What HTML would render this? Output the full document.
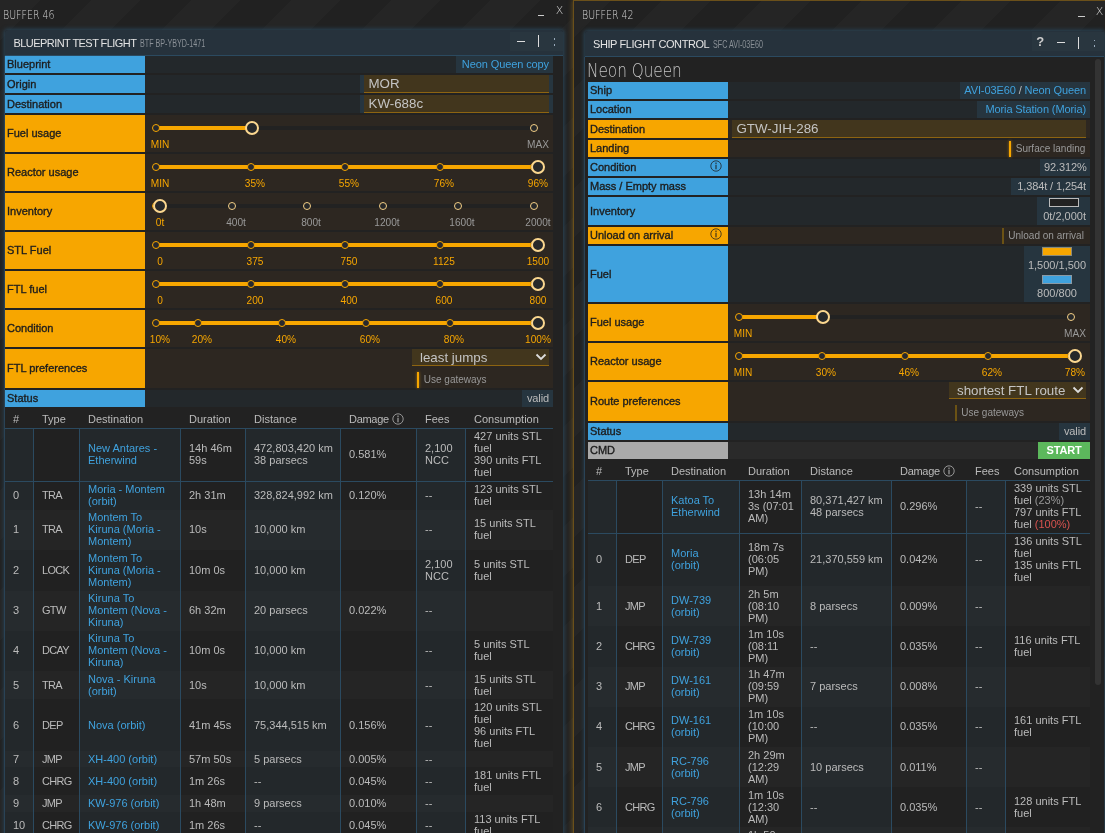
<!DOCTYPE html>
<html lang="en"><head><meta charset="utf-8"><title>Flight control</title>
<style>
*{box-sizing:border-box;margin:0;padding:0}
html,body{width:1105px;height:833px;overflow:hidden;background:#222}
body{position:relative;font-family:"Liberation Sans",sans-serif;font-size:11px;color:#bbb;line-height:12px}
.abs,.abs>*{position:absolute}
#stripes{left:-59px;top:0;width:1164px;height:833px;background:repeating-linear-gradient(135deg,#212121 0,#212121 35.4px,#252525 35.4px,#252525 70.7px)}
.wt{font-family:"DejaVu Sans","Liberation Sans",sans-serif;font-weight:200;color:#d0d0d0;font-size:12px;line-height:14px;white-space:nowrap;transform-origin:0 50%;transform:scaleX(.787)}
.tile{background:#222;box-shadow:0 0 4px 1px #2a4659;border-radius:3px 3px 0 0}
.th{background:#26323c;border-bottom:1px solid #2b4a60;border-radius:3px 3px 0 0}
.tt{color:#e4e4e4;font-size:11px;line-height:14px;white-space:nowrap;letter-spacing:-.55px}
.ts{color:#8a9096;font-size:10px;line-height:14px;white-space:nowrap;transform-origin:0 50%;transform:scaleX(.715)}
.tb{background:#29363f}
.lab{color:#1d1d1d;font-size:11px;white-space:nowrap;-webkit-text-stroke:.35px #1d1d1d;letter-spacing:0}
.lab span{position:absolute;left:2px;top:50%;margin-top:-6.5px;line-height:12px}
.vb{background:#26353f;white-space:nowrap;text-align:right;padding:0 4px;letter-spacing:-.1px}
.a{color:#3fa2de}
.inp{background:#42361d;border-bottom:1px solid #8d6411;color:#c4c4c4;font-size:13.33px;line-height:15px;white-space:nowrap;padding-left:4.5px}
.sl{white-space:nowrap;text-align:center;width:40px;margin-left:-20px;line-height:12px;transform:scaleX(.92)}
.on{color:#f7a600}.off{color:#999}
.dot{width:8px;height:8px;border-radius:50%;border:1.5px solid #f7a600;background:#26282e}
.dot.i{border-color:#f5cf85;background:#26282a}
.hd{width:14px;height:14px;border-radius:50%;border:2px solid #fbd78f;background:#26282a}
.tg{white-space:nowrap;color:#999;line-height:12px;font-size:10px}
td,th{font-weight:normal}
.c{position:absolute;white-space:nowrap;line-height:12.05px}
.ty{letter-spacing:-.7px}
.hl{background:#2b4a60}
.red{color:#d9534f}
.dim{color:#999}
</style></head>
<body class="abs">
<div id="stripes"></div>
<div id="root" class="abs" style="left:0;top:0;width:1105px;height:833px;will-change:transform">
<div class="wt" style="left:2.5px;top:7.5px;">BUFFER 46</div>
<div style="left:538px;top:15px;width:6px;height:1px;background:#ccc"></div>
<div class="wt" style="left:555.7px;top:4px;transform:none;font-size:11px">X</div>
<div class="tile" style="left:5px;top:30px;width:558px;height:810px;"></div>
<div class="th" style="left:5px;top:30px;width:558px;height:26px;"></div>
<div class="tb" style="left:510px;top:32px;width:53px;height:19px;"></div>
<div class="tt" style="left:13.5px;top:36px;">BLUEPRINT TEST FLIGHT</div>
<div class="ts" style="left:140px;top:36.5px;">BTF BP-YBYD-1471</div>
<div style="left:517px;top:41px;width:8px;height:1px;background:#ddd"></div>
<div style="left:538px;top:35px;width:1px;height:12px;background:#ddd"></div>
<div style="left:553.5px;top:38px;width:1.5px;height:1.5px;background:#9ab"></div>
<div style="left:553.5px;top:44px;width:1.5px;height:1.5px;background:#9ab"></div>
<div class="lab" style="left:5px;top:56px;width:140px;height:17px;background:#3fa2de"><span>Blueprint</span></div>
<div style="left:145px;top:56px;width:408px;height:17px;background:#23282b"></div>
<div class="vb a" style="left:456px;top:56px;width:97px;height:17px;"><span style="position:relative;top:2px">Neon Queen copy</span></div>
<div class="lab" style="left:5px;top:75px;width:140px;height:18px;background:#3fa2de"><span>Origin</span></div>
<div style="left:145px;top:75px;width:408px;height:18px;background:#23282b"></div>
<div style="left:360px;top:75px;width:193px;height:18px;background:#26353f"></div>
<div class="inp" style="left:364px;top:75px;width:185px;height:18px;"><span style="position:relative;top:1px">MOR</span></div>
<div class="lab" style="left:5px;top:95px;width:140px;height:18px;background:#3fa2de"><span>Destination</span></div>
<div style="left:145px;top:95px;width:408px;height:18px;background:#23282b"></div>
<div style="left:360px;top:95px;width:193px;height:18px;background:#26353f"></div>
<div class="inp" style="left:364px;top:95px;width:185px;height:18px;"><span style="position:relative;top:1px">KW-688c</span></div>
<div class="lab" style="left:5px;top:115px;width:140px;height:37px;background:#f7a600"><span>Fuel usage</span></div>
<div style="left:145px;top:115px;width:408px;height:37px;background:#2d2721"></div>
<div style="left:159px;top:126px;width:379px;height:4px;background:#222"></div>
<div style="left:159px;top:126px;width:93.0px;height:4px;background:#f7a600"></div>
<div class="dot" style="left:152px;top:124px;width:8px;height:8px;"></div>
<div class="dot i" style="left:530px;top:124px;width:8px;height:8px;"></div>
<div class="hd" style="left:245.0px;top:121px;width:14px;height:14px;"></div>
<div class="sl on" style="left:160px;top:138.3px;">MIN</div>
<div class="sl off" style="left:538px;top:138.3px;">MAX</div>
<div class="lab" style="left:5px;top:154px;width:140px;height:37px;background:#f7a600"><span>Reactor usage</span></div>
<div style="left:145px;top:154px;width:408px;height:37px;background:#2d2721"></div>
<div style="left:159px;top:165px;width:379px;height:4px;background:#222"></div>
<div style="left:159px;top:165px;width:379px;height:4px;background:#f7a600"></div>
<div class="dot" style="left:152px;top:163px;width:8px;height:8px;"></div>
<div class="dot" style="left:246.5px;top:163px;width:8px;height:8px;"></div>
<div class="dot" style="left:341.0px;top:163px;width:8px;height:8px;"></div>
<div class="dot" style="left:435.5px;top:163px;width:8px;height:8px;"></div>
<div class="dot" style="left:530px;top:163px;width:8px;height:8px;"></div>
<div class="hd" style="left:531px;top:160px;width:14px;height:14px;"></div>
<div class="sl on" style="left:160px;top:177.3px;">MIN</div>
<div class="sl on" style="left:254.5px;top:177.3px;">35%</div>
<div class="sl on" style="left:349.0px;top:177.3px;">55%</div>
<div class="sl on" style="left:443.5px;top:177.3px;">76%</div>
<div class="sl on" style="left:538px;top:177.3px;">96%</div>
<div class="lab" style="left:5px;top:193px;width:140px;height:37px;background:#f7a600"><span>Inventory</span></div>
<div style="left:145px;top:193px;width:408px;height:37px;background:#2d2721"></div>
<div style="left:159px;top:204px;width:379px;height:4px;background:#222"></div>
<div style="left:159px;top:204px;width:1px;height:4px;background:#f7a600"></div>
<div class="dot" style="left:152px;top:202px;width:8px;height:8px;"></div>
<div class="dot i" style="left:227.6px;top:202px;width:8px;height:8px;"></div>
<div class="dot i" style="left:303.2px;top:202px;width:8px;height:8px;"></div>
<div class="dot i" style="left:378.8px;top:202px;width:8px;height:8px;"></div>
<div class="dot i" style="left:454.4px;top:202px;width:8px;height:8px;"></div>
<div class="dot i" style="left:530px;top:202px;width:8px;height:8px;"></div>
<div class="hd" style="left:153px;top:199px;width:14px;height:14px;"></div>
<div class="sl on" style="left:160px;top:216.3px;">0t</div>
<div class="sl off" style="left:235.6px;top:216.3px;">400t</div>
<div class="sl off" style="left:311.2px;top:216.3px;">800t</div>
<div class="sl off" style="left:386.8px;top:216.3px;">1200t</div>
<div class="sl off" style="left:462.4px;top:216.3px;">1600t</div>
<div class="sl off" style="left:538px;top:216.3px;">2000t</div>
<div class="lab" style="left:5px;top:232px;width:140px;height:37px;background:#f7a600"><span>STL Fuel</span></div>
<div style="left:145px;top:232px;width:408px;height:37px;background:#2d2721"></div>
<div style="left:159px;top:243px;width:379px;height:4px;background:#222"></div>
<div style="left:159px;top:243px;width:379px;height:4px;background:#f7a600"></div>
<div class="dot" style="left:152px;top:241px;width:8px;height:8px;"></div>
<div class="dot" style="left:246.5px;top:241px;width:8px;height:8px;"></div>
<div class="dot" style="left:341.0px;top:241px;width:8px;height:8px;"></div>
<div class="dot" style="left:435.5px;top:241px;width:8px;height:8px;"></div>
<div class="dot" style="left:530px;top:241px;width:8px;height:8px;"></div>
<div class="hd" style="left:531px;top:238px;width:14px;height:14px;"></div>
<div class="sl on" style="left:160px;top:255.3px;">0</div>
<div class="sl on" style="left:254.5px;top:255.3px;">375</div>
<div class="sl on" style="left:349.0px;top:255.3px;">750</div>
<div class="sl on" style="left:443.5px;top:255.3px;">1125</div>
<div class="sl on" style="left:538px;top:255.3px;">1500</div>
<div class="lab" style="left:5px;top:271px;width:140px;height:37px;background:#f7a600"><span>FTL fuel</span></div>
<div style="left:145px;top:271px;width:408px;height:37px;background:#2d2721"></div>
<div style="left:159px;top:282px;width:379px;height:4px;background:#222"></div>
<div style="left:159px;top:282px;width:379px;height:4px;background:#f7a600"></div>
<div class="dot" style="left:152px;top:280px;width:8px;height:8px;"></div>
<div class="dot" style="left:246.5px;top:280px;width:8px;height:8px;"></div>
<div class="dot" style="left:341.0px;top:280px;width:8px;height:8px;"></div>
<div class="dot" style="left:435.5px;top:280px;width:8px;height:8px;"></div>
<div class="dot" style="left:530px;top:280px;width:8px;height:8px;"></div>
<div class="hd" style="left:531px;top:277px;width:14px;height:14px;"></div>
<div class="sl on" style="left:160px;top:294.3px;">0</div>
<div class="sl on" style="left:254.5px;top:294.3px;">200</div>
<div class="sl on" style="left:349.0px;top:294.3px;">400</div>
<div class="sl on" style="left:443.5px;top:294.3px;">600</div>
<div class="sl on" style="left:538px;top:294.3px;">800</div>
<div class="lab" style="left:5px;top:310px;width:140px;height:37px;background:#f7a600"><span>Condition</span></div>
<div style="left:145px;top:310px;width:408px;height:37px;background:#2d2721"></div>
<div style="left:159px;top:321px;width:379px;height:4px;background:#222"></div>
<div style="left:159px;top:321px;width:379px;height:4px;background:#f7a600"></div>
<div class="dot" style="left:152px;top:319px;width:8px;height:8px;"></div>
<div class="dot" style="left:194.0px;top:319px;width:8px;height:8px;"></div>
<div class="dot" style="left:278.0px;top:319px;width:8px;height:8px;"></div>
<div class="dot" style="left:362.0px;top:319px;width:8px;height:8px;"></div>
<div class="dot" style="left:446.0px;top:319px;width:8px;height:8px;"></div>
<div class="dot" style="left:530px;top:319px;width:8px;height:8px;"></div>
<div class="hd" style="left:531px;top:316px;width:14px;height:14px;"></div>
<div class="sl on" style="left:160px;top:333.3px;">10%</div>
<div class="sl on" style="left:202.0px;top:333.3px;">20%</div>
<div class="sl on" style="left:286.0px;top:333.3px;">40%</div>
<div class="sl on" style="left:370.0px;top:333.3px;">60%</div>
<div class="sl on" style="left:454.0px;top:333.3px;">80%</div>
<div class="sl on" style="left:538px;top:333.3px;">100%</div>
<div class="lab" style="left:5px;top:349px;width:140px;height:39px;background:#f7a600"><span>FTL preferences</span></div>
<div style="left:145px;top:349px;width:408px;height:39px;background:#2d2721"></div>
<div class="inp" style="left:412px;top:349px;width:137px;height:17px;padding-left:8px"><span style="position:relative;top:0.5px">least jumps</span><svg width="12" height="8" viewBox="0 0 12 8" style="position:absolute;right:2px;top:4.3px"><path d="M1.5 1.5 L6 6 L10.5 1.5" fill="none" stroke="#ddd" stroke-width="1.8"/></svg></div>
<div style="left:417px;top:372px;width:2px;height:16px;background:#f7a600;box-shadow:0 0 3px #f7a600aa"></div>
<div class="tg" style="left:423.8px;top:374px;">Use gateways</div>
<div class="lab" style="left:5px;top:390px;width:140px;height:17px;background:#3fa2de"><span>Status</span></div>
<div style="left:145px;top:390px;width:408px;height:17px;background:#23282b"></div>
<div class="vb" style="left:522px;top:390px;width:31px;height:17px;"><span style="position:relative;top:2px">valid</span></div>
<div class="c" style="left:13px;top:412.5px;color:#bbb">#</div>
<div class="c" style="left:42px;top:412.5px;color:#bbb">Type</div>
<div class="c" style="left:88px;top:412.5px;color:#bbb">Destination</div>
<div class="c" style="left:189px;top:412.5px;color:#bbb">Duration</div>
<div class="c" style="left:254px;top:412.5px;color:#bbb">Distance</div>
<div class="c" style="left:349px;top:412.5px;color:#bbb"><span style="letter-spacing:-.3px">Damage</span> <svg width="12" height="12" viewBox="0 0 12 12" style="vertical-align:-2.5px;margin-left:.5px"><circle cx="6" cy="6" r="5.2" fill="none" stroke="#bbb" stroke-width="0.75"/><rect x="5.5" y="4.7" width="1" height="4.6" fill="#bbb"/><rect x="5.4" y="2.6" width="1.2" height="1.2" fill="#bbb"/></svg></div>
<div class="c" style="left:425px;top:412.5px;color:#bbb">Fees</div>
<div class="c" style="left:474px;top:412.5px;color:#bbb">Consumption</div>
<div class="hl" style="left:5px;top:428px;width:548px;height:1px;"></div>
<div style="left:5px;top:429px;width:28px;height:52px;background:#23282b"></div>
<div style="left:34px;top:429px;width:45px;height:52px;background:#212121"></div>
<div style="left:80px;top:429px;width:100px;height:52px;background:#23282b"><div class="c a" style="left:8px;top:12.9px">New Antares -<br>Etherwind</div></div>
<div style="left:181px;top:429px;width:64px;height:52px;background:#212121"><div class="c" style="left:8px;top:12.9px">14h 46m<br>59s</div></div>
<div style="left:246px;top:429px;width:94px;height:52px;background:#23282b"><div class="c" style="left:8px;top:12.9px">472,803,420 km<br>38 parsecs</div></div>
<div style="left:341px;top:429px;width:75px;height:52px;background:#212121"><div class="c" style="left:8px;top:19.0px">0.581%</div></div>
<div style="left:417px;top:429px;width:48px;height:52px;background:#23282b"><div class="c" style="left:8px;top:12.9px">2,100<br>NCC</div></div>
<div style="left:466px;top:429px;width:87px;height:52px;background:#212121"><div class="c" style="left:8px;top:0.9px">427 units STL<br>fuel<br>390 units FTL<br>fuel</div></div>
<div class="hl" style="left:5px;top:481px;width:548px;height:1px;"></div>
<div style="left:5px;top:482px;width:28px;height:28px;background:#23282b"><div class="c" style="left:8px;top:6.8px">0</div></div>
<div style="left:34px;top:482px;width:45px;height:28px;background:#212121"><div class="c ty" style="left:8px;top:6.8px">TRA</div></div>
<div style="left:80px;top:482px;width:100px;height:28px;background:#23282b"><div class="c a" style="left:8px;top:0.8px">Moria - Montem<br>(orbit)</div></div>
<div style="left:181px;top:482px;width:64px;height:28px;background:#212121"><div class="c" style="left:8px;top:6.8px">2h 31m</div></div>
<div style="left:246px;top:482px;width:94px;height:28px;background:#23282b"><div class="c" style="left:8px;top:6.8px">328,824,992 km</div></div>
<div style="left:341px;top:482px;width:75px;height:28px;background:#212121"><div class="c" style="left:8px;top:6.8px">0.120%</div></div>
<div style="left:417px;top:482px;width:48px;height:28px;background:#23282b"><div class="c" style="left:8px;top:6.8px">--</div></div>
<div style="left:466px;top:482px;width:87px;height:28px;background:#212121"><div class="c" style="left:8px;top:0.8px">123 units STL<br>fuel</div></div>
<div style="left:5px;top:510px;width:28px;height:40px;background:#262b2e"><div class="c" style="left:8px;top:13.0px">1</div></div>
<div style="left:34px;top:510px;width:45px;height:40px;background:#252525"><div class="c ty" style="left:8px;top:13.0px">TRA</div></div>
<div style="left:80px;top:510px;width:100px;height:40px;background:#262b2e"><div class="c a" style="left:8px;top:0.9px">Montem To<br>Kiruna (Moria -<br>Montem)</div></div>
<div style="left:181px;top:510px;width:64px;height:40px;background:#252525"><div class="c" style="left:8px;top:13.0px">10s</div></div>
<div style="left:246px;top:510px;width:94px;height:40px;background:#262b2e"><div class="c" style="left:8px;top:13.0px">10,000 km</div></div>
<div style="left:341px;top:510px;width:75px;height:40px;background:#252525"></div>
<div style="left:417px;top:510px;width:48px;height:40px;background:#262b2e"><div class="c" style="left:8px;top:13.0px">--</div></div>
<div style="left:466px;top:510px;width:87px;height:40px;background:#252525"><div class="c" style="left:8px;top:7.0px">15 units STL<br>fuel</div></div>
<div style="left:5px;top:550px;width:28px;height:41px;background:#23282b"><div class="c" style="left:8px;top:14.0px">2</div></div>
<div style="left:34px;top:550px;width:45px;height:41px;background:#212121"><div class="c ty" style="left:8px;top:14.0px">LOCK</div></div>
<div style="left:80px;top:550px;width:100px;height:41px;background:#23282b"><div class="c a" style="left:8px;top:1.9px">Montem To<br>Kiruna (Moria -<br>Montem)</div></div>
<div style="left:181px;top:550px;width:64px;height:41px;background:#212121"><div class="c" style="left:8px;top:14.0px">10m 0s</div></div>
<div style="left:246px;top:550px;width:94px;height:41px;background:#23282b"><div class="c" style="left:8px;top:14.0px">10,000 km</div></div>
<div style="left:341px;top:550px;width:75px;height:41px;background:#212121"></div>
<div style="left:417px;top:550px;width:48px;height:41px;background:#23282b"><div class="c" style="left:8px;top:8.0px">2,100<br>NCC</div></div>
<div style="left:466px;top:550px;width:87px;height:41px;background:#212121"><div class="c" style="left:8px;top:8.0px">5 units STL<br>fuel</div></div>
<div style="left:5px;top:591px;width:28px;height:40px;background:#262b2e"><div class="c" style="left:8px;top:13.2px">3</div></div>
<div style="left:34px;top:591px;width:45px;height:40px;background:#252525"><div class="c ty" style="left:8px;top:13.2px">GTW</div></div>
<div style="left:80px;top:591px;width:100px;height:40px;background:#262b2e"><div class="c a" style="left:8px;top:1.1px">Kiruna To<br>Montem (Nova -<br>Kiruna)</div></div>
<div style="left:181px;top:591px;width:64px;height:40px;background:#252525"><div class="c" style="left:8px;top:13.2px">6h 32m</div></div>
<div style="left:246px;top:591px;width:94px;height:40px;background:#262b2e"><div class="c" style="left:8px;top:13.2px">20 parsecs</div></div>
<div style="left:341px;top:591px;width:75px;height:40px;background:#252525"><div class="c" style="left:8px;top:13.2px">0.022%</div></div>
<div style="left:417px;top:591px;width:48px;height:40px;background:#262b2e"><div class="c" style="left:8px;top:13.2px">--</div></div>
<div style="left:466px;top:591px;width:87px;height:40px;background:#252525"></div>
<div style="left:5px;top:631px;width:28px;height:40px;background:#23282b"><div class="c" style="left:8px;top:13.4px">4</div></div>
<div style="left:34px;top:631px;width:45px;height:40px;background:#212121"><div class="c ty" style="left:8px;top:13.4px">DCAY</div></div>
<div style="left:80px;top:631px;width:100px;height:40px;background:#23282b"><div class="c a" style="left:8px;top:1.3px">Kiruna To<br>Montem (Nova -<br>Kiruna)</div></div>
<div style="left:181px;top:631px;width:64px;height:40px;background:#212121"><div class="c" style="left:8px;top:13.4px">10m 0s</div></div>
<div style="left:246px;top:631px;width:94px;height:40px;background:#23282b"><div class="c" style="left:8px;top:13.4px">10,000 km</div></div>
<div style="left:341px;top:631px;width:75px;height:40px;background:#212121"></div>
<div style="left:417px;top:631px;width:48px;height:40px;background:#23282b"><div class="c" style="left:8px;top:13.4px">--</div></div>
<div style="left:466px;top:631px;width:87px;height:40px;background:#212121"><div class="c" style="left:8px;top:7.4px">5 units STL<br>fuel</div></div>
<div style="left:5px;top:671px;width:28px;height:28px;background:#262b2e"><div class="c" style="left:8px;top:7.5px">5</div></div>
<div style="left:34px;top:671px;width:45px;height:28px;background:#252525"><div class="c ty" style="left:8px;top:7.5px">TRA</div></div>
<div style="left:80px;top:671px;width:100px;height:28px;background:#262b2e"><div class="c a" style="left:8px;top:1.5px">Nova - Kiruna<br>(orbit)</div></div>
<div style="left:181px;top:671px;width:64px;height:28px;background:#252525"><div class="c" style="left:8px;top:7.5px">10s</div></div>
<div style="left:246px;top:671px;width:94px;height:28px;background:#262b2e"><div class="c" style="left:8px;top:7.5px">10,000 km</div></div>
<div style="left:341px;top:671px;width:75px;height:28px;background:#252525"></div>
<div style="left:417px;top:671px;width:48px;height:28px;background:#262b2e"><div class="c" style="left:8px;top:7.5px">--</div></div>
<div style="left:466px;top:671px;width:87px;height:28px;background:#252525"><div class="c" style="left:8px;top:1.5px">15 units STL<br>fuel</div></div>
<div style="left:5px;top:699px;width:28px;height:52px;background:#23282b"><div class="c" style="left:8px;top:19.7px">6</div></div>
<div style="left:34px;top:699px;width:45px;height:52px;background:#212121"><div class="c ty" style="left:8px;top:19.7px">DEP</div></div>
<div style="left:80px;top:699px;width:100px;height:52px;background:#23282b"><div class="c a" style="left:8px;top:19.7px">Nova (orbit)</div></div>
<div style="left:181px;top:699px;width:64px;height:52px;background:#212121"><div class="c" style="left:8px;top:19.7px">41m 45s</div></div>
<div style="left:246px;top:699px;width:94px;height:52px;background:#23282b"><div class="c" style="left:8px;top:19.7px">75,344,515 km</div></div>
<div style="left:341px;top:699px;width:75px;height:52px;background:#212121"><div class="c" style="left:8px;top:19.7px">0.156%</div></div>
<div style="left:417px;top:699px;width:48px;height:52px;background:#23282b"><div class="c" style="left:8px;top:19.7px">--</div></div>
<div style="left:466px;top:699px;width:87px;height:52px;background:#212121"><div class="c" style="left:8px;top:1.6px">120 units STL<br>fuel<br>96 units FTL<br>fuel</div></div>
<div style="left:5px;top:751px;width:28px;height:16px;background:#262b2e"><div class="c" style="left:8px;top:1.8px">7</div></div>
<div style="left:34px;top:751px;width:45px;height:16px;background:#252525"><div class="c ty" style="left:8px;top:1.8px">JMP</div></div>
<div style="left:80px;top:751px;width:100px;height:16px;background:#262b2e"><div class="c a" style="left:8px;top:1.8px">XH-400 (orbit)</div></div>
<div style="left:181px;top:751px;width:64px;height:16px;background:#252525"><div class="c" style="left:8px;top:1.8px">57m 50s</div></div>
<div style="left:246px;top:751px;width:94px;height:16px;background:#262b2e"><div class="c" style="left:8px;top:1.8px">5 parsecs</div></div>
<div style="left:341px;top:751px;width:75px;height:16px;background:#252525"><div class="c" style="left:8px;top:1.8px">0.005%</div></div>
<div style="left:417px;top:751px;width:48px;height:16px;background:#262b2e"><div class="c" style="left:8px;top:1.8px">--</div></div>
<div style="left:466px;top:751px;width:87px;height:16px;background:#252525"></div>
<div style="left:5px;top:767px;width:28px;height:28px;background:#23282b"><div class="c" style="left:8px;top:7.9px">8</div></div>
<div style="left:34px;top:767px;width:45px;height:28px;background:#212121"><div class="c ty" style="left:8px;top:7.9px">CHRG</div></div>
<div style="left:80px;top:767px;width:100px;height:28px;background:#23282b"><div class="c a" style="left:8px;top:7.9px">XH-400 (orbit)</div></div>
<div style="left:181px;top:767px;width:64px;height:28px;background:#212121"><div class="c" style="left:8px;top:7.9px">1m 26s</div></div>
<div style="left:246px;top:767px;width:94px;height:28px;background:#23282b"><div class="c" style="left:8px;top:7.9px">--</div></div>
<div style="left:341px;top:767px;width:75px;height:28px;background:#212121"><div class="c" style="left:8px;top:7.9px">0.045%</div></div>
<div style="left:417px;top:767px;width:48px;height:28px;background:#23282b"><div class="c" style="left:8px;top:7.9px">--</div></div>
<div style="left:466px;top:767px;width:87px;height:28px;background:#212121"><div class="c" style="left:8px;top:1.9px">181 units FTL<br>fuel</div></div>
<div style="left:5px;top:795px;width:28px;height:17px;background:#262b2e"><div class="c" style="left:8px;top:2.0px">9</div></div>
<div style="left:34px;top:795px;width:45px;height:17px;background:#252525"><div class="c ty" style="left:8px;top:2.0px">JMP</div></div>
<div style="left:80px;top:795px;width:100px;height:17px;background:#262b2e"><div class="c a" style="left:8px;top:2.0px">KW-976 (orbit)</div></div>
<div style="left:181px;top:795px;width:64px;height:17px;background:#252525"><div class="c" style="left:8px;top:2.0px">1h 48m</div></div>
<div style="left:246px;top:795px;width:94px;height:17px;background:#262b2e"><div class="c" style="left:8px;top:2.0px">9 parsecs</div></div>
<div style="left:341px;top:795px;width:75px;height:17px;background:#252525"><div class="c" style="left:8px;top:2.0px">0.010%</div></div>
<div style="left:417px;top:795px;width:48px;height:17px;background:#262b2e"><div class="c" style="left:8px;top:2.0px">--</div></div>
<div style="left:466px;top:795px;width:87px;height:17px;background:#252525"></div>
<div style="left:5px;top:812px;width:28px;height:28px;background:#23282b"><div class="c" style="left:8px;top:7.1px">10</div></div>
<div style="left:34px;top:812px;width:45px;height:28px;background:#212121"><div class="c ty" style="left:8px;top:7.1px">CHRG</div></div>
<div style="left:80px;top:812px;width:100px;height:28px;background:#23282b"><div class="c a" style="left:8px;top:7.1px">KW-976 (orbit)</div></div>
<div style="left:181px;top:812px;width:64px;height:28px;background:#212121"><div class="c" style="left:8px;top:7.1px">1m 26s</div></div>
<div style="left:246px;top:812px;width:94px;height:28px;background:#23282b"><div class="c" style="left:8px;top:7.1px">--</div></div>
<div style="left:341px;top:812px;width:75px;height:28px;background:#212121"><div class="c" style="left:8px;top:7.1px">0.045%</div></div>
<div style="left:417px;top:812px;width:48px;height:28px;background:#23282b"><div class="c" style="left:8px;top:7.1px">--</div></div>
<div style="left:466px;top:812px;width:87px;height:28px;background:#212121"><div class="c" style="left:8px;top:1.1px">113 units FTL<br>fuel</div></div>
<div class="hl" style="left:33px;top:429px;width:1px;height:900px;"></div>
<div class="hl" style="left:79px;top:429px;width:1px;height:900px;"></div>
<div class="hl" style="left:180px;top:429px;width:1px;height:900px;"></div>
<div class="hl" style="left:245px;top:429px;width:1px;height:900px;"></div>
<div class="hl" style="left:340px;top:429px;width:1px;height:900px;"></div>
<div class="hl" style="left:416px;top:429px;width:1px;height:900px;"></div>
<div class="hl" style="left:465px;top:429px;width:1px;height:900px;"></div>
<div style="left:4px;top:56px;width:1px;height:800px;background:#2a4356"></div>
<div style="left:573px;top:0px;width:540px;height:840px;border:1px solid #6b501a;box-shadow:0 0 5px 0 rgba(190,135,25,.5);overflow:hidden;background:#212121"><div style="position:absolute;left:-63px;top:0;width:620px;height:840px;background:repeating-linear-gradient(135deg,#212121 0,#212121 35.4px,#252525 35.4px,#252525 70.7px)"></div></div>
<div class="wt" style="left:582px;top:8.3px;">BUFFER 42</div>
<div style="left:1078px;top:16px;width:6.5px;height:1px;background:#ccc"></div>
<div class="wt" style="left:1095.8px;top:5px;transform:none;font-size:11px">X</div>
<div class="tile" style="left:585px;top:31px;width:518.5px;height:810px;"></div>
<div class="th" style="left:585px;top:31px;width:518.5px;height:26px;"></div>
<div class="tb" style="left:1032px;top:32px;width:71.5px;height:19px;"></div>
<div class="tt" style="left:593px;top:37px;letter-spacing:-.42px">SHIP FLIGHT CONTROL</div>
<div class="ts" style="left:712.5px;top:37.5px;">SFC AVI-03E60</div>
<div class="tt" style="left:1036.3px;top:35px;font-weight:bold;color:#ccc;letter-spacing:0;font-size:13px">?</div>
<div style="left:1057px;top:42px;width:8px;height:1px;background:#ddd"></div>
<div style="left:1078px;top:37px;width:1px;height:12px;background:#ddd"></div>
<div style="left:1093.5px;top:39.5px;width:1.5px;height:1.5px;background:#9ab"></div>
<div style="left:1093.5px;top:45px;width:1.5px;height:1.5px;background:#9ab"></div>
<div style="left:1095px;top:59px;width:6px;height:626px;background:#333;border-radius:3px"></div>
<div class="wt" style="left:586.5px;top:60px;font-size:19px;line-height:20px;color:#c4c4c4;transform:scaleX(.803)">Neon Queen</div>
<div class="lab" style="left:588px;top:82px;width:140px;height:17px;background:#3fa2de"><span>Ship</span></div>
<div style="left:728px;top:82px;width:362px;height:17px;background:#23282b"></div>
<div class="vb" style="left:960px;top:82px;width:130px;height:17px;"><span style="position:relative;top:2px"><span class="a">AVI-03E60</span> / <span class="a">Neon Queen</span></span></div>
<div class="lab" style="left:588px;top:101px;width:140px;height:17px;background:#3fa2de"><span>Location</span></div>
<div style="left:728px;top:101px;width:362px;height:17px;background:#23282b"></div>
<div class="vb a" style="left:977px;top:101px;width:113px;height:17px;"><span style="position:relative;top:2px">Moria Station (Moria)</span></div>
<div class="lab" style="left:588px;top:120px;width:140px;height:18px;background:#f7a600"><span>Destination</span></div>
<div style="left:728px;top:120px;width:362px;height:18px;background:#2d2721"></div>
<div class="inp" style="left:732px;top:120px;width:354px;height:18px;"><span style="position:relative;top:1px">GTW-JIH-286</span></div>
<div class="lab" style="left:588px;top:140px;width:140px;height:17px;background:#f7a600"><span>Landing</span></div>
<div style="left:728px;top:140px;width:362px;height:17px;background:#2d2721"></div>
<div style="left:1009px;top:140.5px;width:2px;height:16px;background:#f7a600;box-shadow:0 0 3px #f7a600aa"></div>
<div class="tg" style="left:1015.8px;top:142.5px;">Surface landing</div>
<div class="lab" style="left:588px;top:159px;width:140px;height:17px;background:#3fa2de"><span>Condition</span><svg width="12" height="12" viewBox="0 0 12 12" style="position:absolute;left:122px;top:1.4000000000000004px"><circle cx="6" cy="6" r="5.2" fill="none" stroke="#1d1d1d" stroke-width="0.75"/><rect x="5.5" y="4.7" width="1" height="4.6" fill="#1d1d1d"/><rect x="5.4" y="2.6" width="1.2" height="1.2" fill="#1d1d1d"/></svg></div>
<div style="left:728px;top:159px;width:362px;height:17px;background:#23282b"></div>
<div class="vb" style="left:1040px;top:159px;width:50px;height:17px;"><span style="position:relative;top:2px">92.312%</span></div>
<div class="lab" style="left:588px;top:178px;width:140px;height:17px;background:#3fa2de"><span>Mass / Empty mass</span></div>
<div style="left:728px;top:178px;width:362px;height:17px;background:#23282b"></div>
<div class="vb" style="left:1011px;top:178px;width:79px;height:17px;"><span style="position:relative;top:2px">1,384t / 1,254t</span></div>
<div class="lab" style="left:588px;top:197px;width:140px;height:28px;background:#3fa2de"><span>Inventory</span></div>
<div style="left:728px;top:197px;width:362px;height:28px;background:#23282b"></div>
<div style="left:1037px;top:197px;width:53px;height:28px;background:#26353f"></div>
<div style="left:1049px;top:198px;width:30px;height:8.5px;border:1px solid #bbb;background:#222"></div>
<div class="c" style="left:1037px;top:209.5px;width:49px;text-align:right">0t/2,000t</div>
<div class="lab" style="left:588px;top:227px;width:140px;height:17px;background:#f7a600"><span>Unload on arrival</span><svg width="12" height="12" viewBox="0 0 12 12" style="position:absolute;left:122px;top:1.4000000000000004px"><circle cx="6" cy="6" r="5.2" fill="none" stroke="#1d1d1d" stroke-width="0.75"/><rect x="5.5" y="4.7" width="1" height="4.6" fill="#1d1d1d"/><rect x="5.4" y="2.6" width="1.2" height="1.2" fill="#1d1d1d"/></svg></div>
<div style="left:728px;top:227px;width:362px;height:17px;background:#2d2721"></div>
<div style="left:1001.5px;top:227.5px;width:2px;height:16px;background:#6b5214"></div>
<div class="tg" style="left:1008.3px;top:229.5px;">Unload on arrival</div>
<div class="lab" style="left:588px;top:246px;width:140px;height:56px;background:#3fa2de"><span>Fuel</span></div>
<div style="left:728px;top:246px;width:362px;height:56px;background:#23282b"></div>
<div style="left:1024px;top:246px;width:66px;height:56px;background:#26353f"></div>
<div style="left:1042px;top:247px;width:30px;height:9px;border:1px solid #8a8a7a;background:#f7a600"></div>
<div class="c" style="left:1024px;top:259px;width:66px;text-align:center">1,500/1,500</div>
<div style="left:1042px;top:275px;width:30px;height:9px;border:1px solid #8a9aa5;background:#3fa2de"></div>
<div class="c" style="left:1024px;top:287px;width:66px;text-align:center">800/800</div>
<div class="lab" style="left:588px;top:304px;width:140px;height:37px;background:#f7a600"><span>Fuel usage</span></div>
<div style="left:728px;top:304px;width:362px;height:37px;background:#2d2721"></div>
<div style="left:742px;top:315px;width:333px;height:4px;background:#222"></div>
<div style="left:742px;top:315px;width:80.60000000000002px;height:4px;background:#f7a600"></div>
<div class="dot" style="left:735px;top:313px;width:8px;height:8px;"></div>
<div class="dot i" style="left:1067px;top:313px;width:8px;height:8px;"></div>
<div class="hd" style="left:815.6px;top:310px;width:14px;height:14px;"></div>
<div class="sl on" style="left:743px;top:327.3px;">MIN</div>
<div class="sl off" style="left:1075px;top:327.3px;">MAX</div>
<div class="lab" style="left:588px;top:343px;width:140px;height:37px;background:#f7a600"><span>Reactor usage</span></div>
<div style="left:728px;top:343px;width:362px;height:37px;background:#2d2721"></div>
<div style="left:742px;top:354px;width:333px;height:4px;background:#222"></div>
<div style="left:742px;top:354px;width:333px;height:4px;background:#f7a600"></div>
<div class="dot" style="left:735px;top:352px;width:8px;height:8px;"></div>
<div class="dot" style="left:818.0px;top:352px;width:8px;height:8px;"></div>
<div class="dot" style="left:901.0px;top:352px;width:8px;height:8px;"></div>
<div class="dot" style="left:984.0px;top:352px;width:8px;height:8px;"></div>
<div class="dot" style="left:1067px;top:352px;width:8px;height:8px;"></div>
<div class="hd" style="left:1068px;top:349px;width:14px;height:14px;"></div>
<div class="sl on" style="left:743px;top:366.3px;">MIN</div>
<div class="sl on" style="left:826.0px;top:366.3px;">30%</div>
<div class="sl on" style="left:909.0px;top:366.3px;">46%</div>
<div class="sl on" style="left:992.0px;top:366.3px;">62%</div>
<div class="sl on" style="left:1075px;top:366.3px;">78%</div>
<div class="lab" style="left:588px;top:382px;width:140px;height:39px;background:#f7a600"><span>Route preferences</span></div>
<div style="left:728px;top:382px;width:362px;height:39px;background:#2d2721"></div>
<div class="inp" style="left:949px;top:382px;width:137px;height:17px;padding-left:8px"><span style="position:relative;top:0.5px">shortest FTL route</span><svg width="12" height="8" viewBox="0 0 12 8" style="position:absolute;right:2px;top:4.3px"><path d="M1.5 1.5 L6 6 L10.5 1.5" fill="none" stroke="#ddd" stroke-width="1.8"/></svg></div>
<div style="left:954.5px;top:405px;width:2px;height:16px;background:#6b5214"></div>
<div class="tg" style="left:961.3px;top:407px;">Use gateways</div>
<div class="lab" style="left:588px;top:423px;width:140px;height:17px;background:#3fa2de"><span>Status</span></div>
<div style="left:728px;top:423px;width:362px;height:17px;background:#23282b"></div>
<div class="vb" style="left:1058.5px;top:423px;width:31.5px;height:17px;"><span style="position:relative;top:2px">valid</span></div>
<div class="lab" style="left:588px;top:442px;width:140px;height:17px;background:#aaaaaa"><span>CMD</span></div>
<div style="left:728px;top:442px;width:362px;height:17px;background:#2a2a2a"></div>
<div style="left:1038px;top:442px;width:52px;height:17px;background:#5cb85c;color:#fff;font-weight:bold;text-align:center;font-size:11px;line-height:17px;letter-spacing:-.2px">START</div>
<div class="c" style="left:596px;top:464.5px;color:#bbb">#</div>
<div class="c" style="left:625px;top:464.5px;color:#bbb">Type</div>
<div class="c" style="left:671px;top:464.5px;color:#bbb">Destination</div>
<div class="c" style="left:748px;top:464.5px;color:#bbb">Duration</div>
<div class="c" style="left:810px;top:464.5px;color:#bbb">Distance</div>
<div class="c" style="left:900px;top:464.5px;color:#bbb"><span style="letter-spacing:-.3px">Damage</span> <svg width="12" height="12" viewBox="0 0 12 12" style="vertical-align:-2.5px;margin-left:.5px"><circle cx="6" cy="6" r="5.2" fill="none" stroke="#bbb" stroke-width="0.75"/><rect x="5.5" y="4.7" width="1" height="4.6" fill="#bbb"/><rect x="5.4" y="2.6" width="1.2" height="1.2" fill="#bbb"/></svg></div>
<div class="c" style="left:975px;top:464.5px;color:#bbb">Fees</div>
<div class="c" style="left:1014px;top:464.5px;color:#bbb">Consumption</div>
<div class="hl" style="left:588px;top:480px;width:502px;height:1px;"></div>
<div style="left:588px;top:481px;width:28px;height:52px;background:#23282b"></div>
<div style="left:617px;top:481px;width:45px;height:52px;background:#212121"></div>
<div style="left:663px;top:481px;width:76px;height:52px;background:#23282b"><div class="c a" style="left:8px;top:12.9px">Katoa To<br>Etherwind</div></div>
<div style="left:740px;top:481px;width:61px;height:52px;background:#212121"><div class="c" style="left:8px;top:6.9px">13h 14m<br>3s (07:01<br>AM)</div></div>
<div style="left:802px;top:481px;width:89px;height:52px;background:#23282b"><div class="c" style="left:8px;top:12.9px">80,371,427 km<br>48 parsecs</div></div>
<div style="left:892px;top:481px;width:74px;height:52px;background:#212121"><div class="c" style="left:8px;top:19.0px">0.296%</div></div>
<div style="left:967px;top:481px;width:38px;height:52px;background:#23282b"><div class="c" style="left:8px;top:19.0px">--</div></div>
<div style="left:1006px;top:481px;width:84px;height:52px;background:#212121"><div class="c" style="left:8px;top:0.9px">339 units STL<br>fuel <span class="dim">(23%)</span><br>797 units FTL<br>fuel <span class="red">(100%)</span></div></div>
<div class="hl" style="left:588px;top:533px;width:502px;height:1px;"></div>
<div style="left:588px;top:534px;width:28px;height:52px;background:#23282b"><div class="c" style="left:8px;top:19.0px">0</div></div>
<div style="left:617px;top:534px;width:45px;height:52px;background:#212121"><div class="c ty" style="left:8px;top:19.0px">DEP</div></div>
<div style="left:663px;top:534px;width:76px;height:52px;background:#23282b"><div class="c a" style="left:8px;top:12.9px">Moria<br>(orbit)</div></div>
<div style="left:740px;top:534px;width:61px;height:52px;background:#212121"><div class="c" style="left:8px;top:6.9px">18m 7s<br>(06:05<br>PM)</div></div>
<div style="left:802px;top:534px;width:89px;height:52px;background:#23282b"><div class="c" style="left:8px;top:19.0px">21,370,559 km</div></div>
<div style="left:892px;top:534px;width:74px;height:52px;background:#212121"><div class="c" style="left:8px;top:19.0px">0.042%</div></div>
<div style="left:967px;top:534px;width:38px;height:52px;background:#23282b"><div class="c" style="left:8px;top:19.0px">--</div></div>
<div style="left:1006px;top:534px;width:84px;height:52px;background:#212121"><div class="c" style="left:8px;top:0.9px">136 units STL<br>fuel<br>135 units FTL<br>fuel</div></div>
<div style="left:588px;top:586px;width:28px;height:40px;background:#262b2e"><div class="c" style="left:8px;top:13.9px">1</div></div>
<div style="left:617px;top:586px;width:45px;height:40px;background:#252525"><div class="c ty" style="left:8px;top:13.9px">JMP</div></div>
<div style="left:663px;top:586px;width:76px;height:40px;background:#262b2e"><div class="c a" style="left:8px;top:7.9px">DW-739<br>(orbit)</div></div>
<div style="left:740px;top:586px;width:61px;height:40px;background:#252525"><div class="c" style="left:8px;top:1.8px">2h 5m<br>(08:10<br>PM)</div></div>
<div style="left:802px;top:586px;width:89px;height:40px;background:#262b2e"><div class="c" style="left:8px;top:13.9px">8 parsecs</div></div>
<div style="left:892px;top:586px;width:74px;height:40px;background:#252525"><div class="c" style="left:8px;top:13.9px">0.009%</div></div>
<div style="left:967px;top:586px;width:38px;height:40px;background:#262b2e"><div class="c" style="left:8px;top:13.9px">--</div></div>
<div style="left:1006px;top:586px;width:84px;height:40px;background:#252525"></div>
<div style="left:588px;top:626px;width:28px;height:41px;background:#23282b"><div class="c" style="left:8px;top:13.6px">2</div></div>
<div style="left:617px;top:626px;width:45px;height:41px;background:#212121"><div class="c ty" style="left:8px;top:13.6px">CHRG</div></div>
<div style="left:663px;top:626px;width:76px;height:41px;background:#23282b"><div class="c a" style="left:8px;top:7.6px">DW-739<br>(orbit)</div></div>
<div style="left:740px;top:626px;width:61px;height:41px;background:#212121"><div class="c" style="left:8px;top:1.5px">1m 10s<br>(08:11<br>PM)</div></div>
<div style="left:802px;top:626px;width:89px;height:41px;background:#23282b"><div class="c" style="left:8px;top:13.6px">--</div></div>
<div style="left:892px;top:626px;width:74px;height:41px;background:#212121"><div class="c" style="left:8px;top:13.6px">0.035%</div></div>
<div style="left:967px;top:626px;width:38px;height:41px;background:#23282b"><div class="c" style="left:8px;top:13.6px">--</div></div>
<div style="left:1006px;top:626px;width:84px;height:41px;background:#212121"><div class="c" style="left:8px;top:7.6px">116 units FTL<br>fuel</div></div>
<div style="left:588px;top:667px;width:28px;height:40px;background:#262b2e"><div class="c" style="left:8px;top:13.3px">3</div></div>
<div style="left:617px;top:667px;width:45px;height:40px;background:#252525"><div class="c ty" style="left:8px;top:13.3px">JMP</div></div>
<div style="left:663px;top:667px;width:76px;height:40px;background:#262b2e"><div class="c a" style="left:8px;top:7.3px">DW-161<br>(orbit)</div></div>
<div style="left:740px;top:667px;width:61px;height:40px;background:#252525"><div class="c" style="left:8px;top:1.2px">1h 47m<br>(09:59<br>PM)</div></div>
<div style="left:802px;top:667px;width:89px;height:40px;background:#262b2e"><div class="c" style="left:8px;top:13.3px">7 parsecs</div></div>
<div style="left:892px;top:667px;width:74px;height:40px;background:#252525"><div class="c" style="left:8px;top:13.3px">0.008%</div></div>
<div style="left:967px;top:667px;width:38px;height:40px;background:#262b2e"><div class="c" style="left:8px;top:13.3px">--</div></div>
<div style="left:1006px;top:667px;width:84px;height:40px;background:#252525"></div>
<div style="left:588px;top:707px;width:28px;height:40px;background:#23282b"><div class="c" style="left:8px;top:12.8px">4</div></div>
<div style="left:617px;top:707px;width:45px;height:40px;background:#212121"><div class="c ty" style="left:8px;top:12.8px">CHRG</div></div>
<div style="left:663px;top:707px;width:76px;height:40px;background:#23282b"><div class="c a" style="left:8px;top:6.8px">DW-161<br>(orbit)</div></div>
<div style="left:740px;top:707px;width:61px;height:40px;background:#212121"><div class="c" style="left:8px;top:0.7px">1m 10s<br>(10:00<br>PM)</div></div>
<div style="left:802px;top:707px;width:89px;height:40px;background:#23282b"><div class="c" style="left:8px;top:12.8px">--</div></div>
<div style="left:892px;top:707px;width:74px;height:40px;background:#212121"><div class="c" style="left:8px;top:12.8px">0.035%</div></div>
<div style="left:967px;top:707px;width:38px;height:40px;background:#23282b"><div class="c" style="left:8px;top:12.8px">--</div></div>
<div style="left:1006px;top:707px;width:84px;height:40px;background:#212121"><div class="c" style="left:8px;top:6.8px">161 units FTL<br>fuel</div></div>
<div style="left:588px;top:747px;width:28px;height:40px;background:#262b2e"><div class="c" style="left:8px;top:13.7px">5</div></div>
<div style="left:617px;top:747px;width:45px;height:40px;background:#252525"><div class="c ty" style="left:8px;top:13.7px">JMP</div></div>
<div style="left:663px;top:747px;width:76px;height:40px;background:#262b2e"><div class="c a" style="left:8px;top:7.7px">RC-796<br>(orbit)</div></div>
<div style="left:740px;top:747px;width:61px;height:40px;background:#252525"><div class="c" style="left:8px;top:1.6px">2h 29m<br>(12:29<br>AM)</div></div>
<div style="left:802px;top:747px;width:89px;height:40px;background:#262b2e"><div class="c" style="left:8px;top:13.7px">10 parsecs</div></div>
<div style="left:892px;top:747px;width:74px;height:40px;background:#252525"><div class="c" style="left:8px;top:13.7px">0.011%</div></div>
<div style="left:967px;top:747px;width:38px;height:40px;background:#262b2e"><div class="c" style="left:8px;top:13.7px">--</div></div>
<div style="left:1006px;top:747px;width:84px;height:40px;background:#252525"></div>
<div style="left:588px;top:787px;width:28px;height:40px;background:#23282b"><div class="c" style="left:8px;top:13.9px">6</div></div>
<div style="left:617px;top:787px;width:45px;height:40px;background:#212121"><div class="c ty" style="left:8px;top:13.9px">CHRG</div></div>
<div style="left:663px;top:787px;width:76px;height:40px;background:#23282b"><div class="c a" style="left:8px;top:7.9px">RC-796<br>(orbit)</div></div>
<div style="left:740px;top:787px;width:61px;height:40px;background:#212121"><div class="c" style="left:8px;top:1.8px">1m 10s<br>(12:30<br>AM)</div></div>
<div style="left:802px;top:787px;width:89px;height:40px;background:#23282b"><div class="c" style="left:8px;top:13.9px">--</div></div>
<div style="left:892px;top:787px;width:74px;height:40px;background:#212121"><div class="c" style="left:8px;top:13.9px">0.035%</div></div>
<div style="left:967px;top:787px;width:38px;height:40px;background:#23282b"><div class="c" style="left:8px;top:13.9px">--</div></div>
<div style="left:1006px;top:787px;width:84px;height:40px;background:#212121"><div class="c" style="left:8px;top:7.9px">128 units FTL<br>fuel</div></div>
<div style="left:588px;top:827px;width:28px;height:41px;background:#262b2e"><div class="c" style="left:8px;top:14.1px">7</div></div>
<div style="left:617px;top:827px;width:45px;height:41px;background:#252525"><div class="c ty" style="left:8px;top:14.1px">JMP</div></div>
<div style="left:663px;top:827px;width:76px;height:41px;background:#262b2e"><div class="c a" style="left:8px;top:8.1px">XH-400<br>(orbit)</div></div>
<div style="left:740px;top:827px;width:61px;height:41px;background:#252525"><div class="c" style="left:8px;top:2.0px">1h 50m<br>(02:20<br>AM)</div></div>
<div style="left:802px;top:827px;width:89px;height:41px;background:#262b2e"><div class="c" style="left:8px;top:14.1px">11 parsecs</div></div>
<div style="left:892px;top:827px;width:74px;height:41px;background:#252525"><div class="c" style="left:8px;top:14.1px">0.012%</div></div>
<div style="left:967px;top:827px;width:38px;height:41px;background:#262b2e"><div class="c" style="left:8px;top:14.1px">--</div></div>
<div style="left:1006px;top:827px;width:84px;height:41px;background:#252525"></div>
<div class="hl" style="left:616px;top:481px;width:1px;height:900px;"></div>
<div class="hl" style="left:662px;top:481px;width:1px;height:900px;"></div>
<div class="hl" style="left:739px;top:481px;width:1px;height:900px;"></div>
<div class="hl" style="left:801px;top:481px;width:1px;height:900px;"></div>
<div class="hl" style="left:891px;top:481px;width:1px;height:900px;"></div>
<div class="hl" style="left:966px;top:481px;width:1px;height:900px;"></div>
<div class="hl" style="left:1005px;top:481px;width:1px;height:900px;"></div>
<div style="left:584px;top:57px;width:1px;height:800px;background:#2a4356"></div>
</div>
</body></html>
